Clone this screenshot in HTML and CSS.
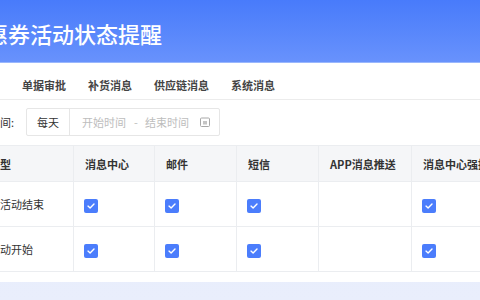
FILE: index.html
```html
<!DOCTYPE html>
<html lang="zh-CN">
<head>
    <meta charset="UTF-8">
    <meta name="viewport" content="width=device-width, initial-scale=1.0">
    <title>优惠券活动状态提醒</title>
    <link rel="stylesheet" href="styles.css">
</head>
<body>
    <div class="page">
        <!-- 顶部标题 -->
        <div class="header">
            <h1>优惠券活动状态提醒</h1>
        </div>

        <div class="card">
            <!-- 消息分类 -->
            <div class="tabs">
                <span class="tab">活动消息</span>
                <span class="tab">单据审批</span>
                <span class="tab">补货消息</span>
                <span class="tab">供应链消息</span>
                <span class="tab">系统消息</span>
            </div>

            <!-- 时间筛选 -->
            <div class="filter">
                <span class="filter-label">免打扰时间:</span>
                <div class="range-box">
                    <span class="range-type">每天</span>
                    <span class="range-input">
                        <span class="placeholder">开始时间</span>
                        <span class="range-sep">-</span>
                        <span class="placeholder">结束时间</span>
                        <svg class="cal-icon" width="10" height="10" viewBox="0 0 10 10">
                            <rect x="0.5" y="1" width="9" height="8.5" rx="1" fill="none" stroke="#a8a8a8" stroke-width="1"/>
                            <rect x="3" y="4" width="4" height="3.5" fill="#c4c4c4"/>
                        </svg>
                    </span>
                </div>
            </div>

            <!-- 通知方式表格 -->
            <table class="notify-table">
                <colgroup>
                    <col class="col-type">
                    <col class="col-a">
                    <col class="col-b">
                    <col class="col-b">
                    <col class="col-c">
                    <col class="col-d">
                </colgroup>
                <tr>
                    <th>提醒类型</th>
                    <th>消息中心</th>
                    <th>邮件</th>
                    <th>短信</th>
                    <th>APP消息推送</th>
                    <th>消息中心强提醒</th>
                </tr>
                <tr>
                    <td>优惠券活动结束</td>
                    <td><span class="check"><svg width="8" height="6" viewBox="0 0 8 6"><path d="M1 3.1 L3.1 5 L7 1" fill="none" stroke="#fff" stroke-width="1.4" stroke-linecap="round" stroke-linejoin="round"/></svg></span></td>
                    <td><span class="check"><svg width="8" height="6" viewBox="0 0 8 6"><path d="M1 3.1 L3.1 5 L7 1" fill="none" stroke="#fff" stroke-width="1.4" stroke-linecap="round" stroke-linejoin="round"/></svg></span></td>
                    <td><span class="check"><svg width="8" height="6" viewBox="0 0 8 6"><path d="M1 3.1 L3.1 5 L7 1" fill="none" stroke="#fff" stroke-width="1.4" stroke-linecap="round" stroke-linejoin="round"/></svg></span></td>
                    <td></td>
                    <td><span class="check"><svg width="8" height="6" viewBox="0 0 8 6"><path d="M1 3.1 L3.1 5 L7 1" fill="none" stroke="#fff" stroke-width="1.4" stroke-linecap="round" stroke-linejoin="round"/></svg></span></td>
                </tr>
                <tr>
                    <td>优惠活动开始</td>
                    <td><span class="check"><svg width="8" height="6" viewBox="0 0 8 6"><path d="M1 3.1 L3.1 5 L7 1" fill="none" stroke="#fff" stroke-width="1.4" stroke-linecap="round" stroke-linejoin="round"/></svg></span></td>
                    <td><span class="check"><svg width="8" height="6" viewBox="0 0 8 6"><path d="M1 3.1 L3.1 5 L7 1" fill="none" stroke="#fff" stroke-width="1.4" stroke-linecap="round" stroke-linejoin="round"/></svg></span></td>
                    <td><span class="check"><svg width="8" height="6" viewBox="0 0 8 6"><path d="M1 3.1 L3.1 5 L7 1" fill="none" stroke="#fff" stroke-width="1.4" stroke-linecap="round" stroke-linejoin="round"/></svg></span></td>
                    <td></td>
                    <td><span class="check"><svg width="8" height="6" viewBox="0 0 8 6"><path d="M1 3.1 L3.1 5 L7 1" fill="none" stroke="#fff" stroke-width="1.4" stroke-linecap="round" stroke-linejoin="round"/></svg></span></td>
                </tr>
            </table>
        </div>
    </div>
</body>
</html>
```

FILE: styles.css
```css
/* 页面整体 */
html, body {
    margin: 0;
    padding: 0;
    overflow: hidden;
}

body {
    width: 480px;
    height: 300px;
    font-family: "Noto Sans CJK SC", "Noto Sans", sans-serif;
    color: #333;
    background: linear-gradient(180deg, #e2e9fb 0%, #e9eefc 100%);
}

/* 外层容器，左侧超出可视区域 */
.page {
    margin-left: -60px;
    width: 640px;
}

/* 顶部蓝色标题栏 */
.header {
    height: 62px;
    padding-left: 24px;
    display: flex;
    align-items: center;
    background: linear-gradient(180deg, #487bfb 0%, #6892fc 100%);
    border-bottom: 1px solid #9ab7fd;
}

.header h1 {
    margin: 0;
    padding-top: 4px;
    font-size: 22px;
    font-weight: 500;
    color: #fff;
    line-height: 1;
}

/* 白色卡片 */
.card {
    background: #fff;
    padding: 0 0 10px 15px;
}

/* 消息分类标签 */
.tabs {
    display: flex;
    gap: 22px;
    padding: 12px 0 4px 16px;
    margin-left: -15px;
    border-bottom: 1px solid #ececec;
}

.tab {
    font-size: 11px;
    line-height: 20px;
    font-weight: 700;
    color: #444;
}

/* 时间筛选 */
.filter {
    display: flex;
    align-items: center;
    margin-top: 8px;
    padding-left: 1px;
}

.filter-label {
    font-size: 11px;
    color: #333;
    margin-right: 12px;
}

.range-box {
    display: flex;
    height: 26px;
    width: 192px;
    border: 1px solid #e6e6e6;
    border-radius: 2px;
}

.range-type {
    width: 42px;
    border-right: 1px solid #e6e6e6;
    display: flex;
    align-items: center;
    justify-content: center;
    font-size: 11px;
    color: #333;
}

.range-input {
    flex: 1;
    display: flex;
    align-items: center;
    padding-left: 12px;
    font-size: 11px;
    color: #bdbdbd;
}

.range-sep {
    margin: 0 7px 0 8px;
}

.cal-icon {
    margin-left: auto;
    margin-right: 9px;
}

/* 通知方式表格 */
.notify-table {
    margin-top: 9px;
    border-collapse: collapse;
    table-layout: fixed;
    width: 580px;
}

.col-type { width: 118px; }
.col-a { width: 81px; }
.col-b { width: 82px; }
.col-c { width: 93px; }
.col-d { width: 124px; }

.notify-table th,
.notify-table td {
    border: 1px solid #ebedf0;
    padding: 0 11px 0 10px;
    text-align: left;
    font-size: 11px;
    white-space: nowrap;
    overflow: hidden;
}

.notify-table th {
    height: 35px;
    padding-left: 11px;
    background: #f5f6f8;
    font-weight: 700;
    color: #333;
}

.notify-table td {
    height: 44px;
    color: #333;
}

.notify-table td:first-child {
    padding-left: 11px;
}

/* 勾选框 */
.check {
    display: inline-flex;
    align-items: center;
    justify-content: center;
    width: 14px;
    height: 14px;
    border-radius: 2px;
    background: #4b7dfc;
    vertical-align: middle;
}
```
